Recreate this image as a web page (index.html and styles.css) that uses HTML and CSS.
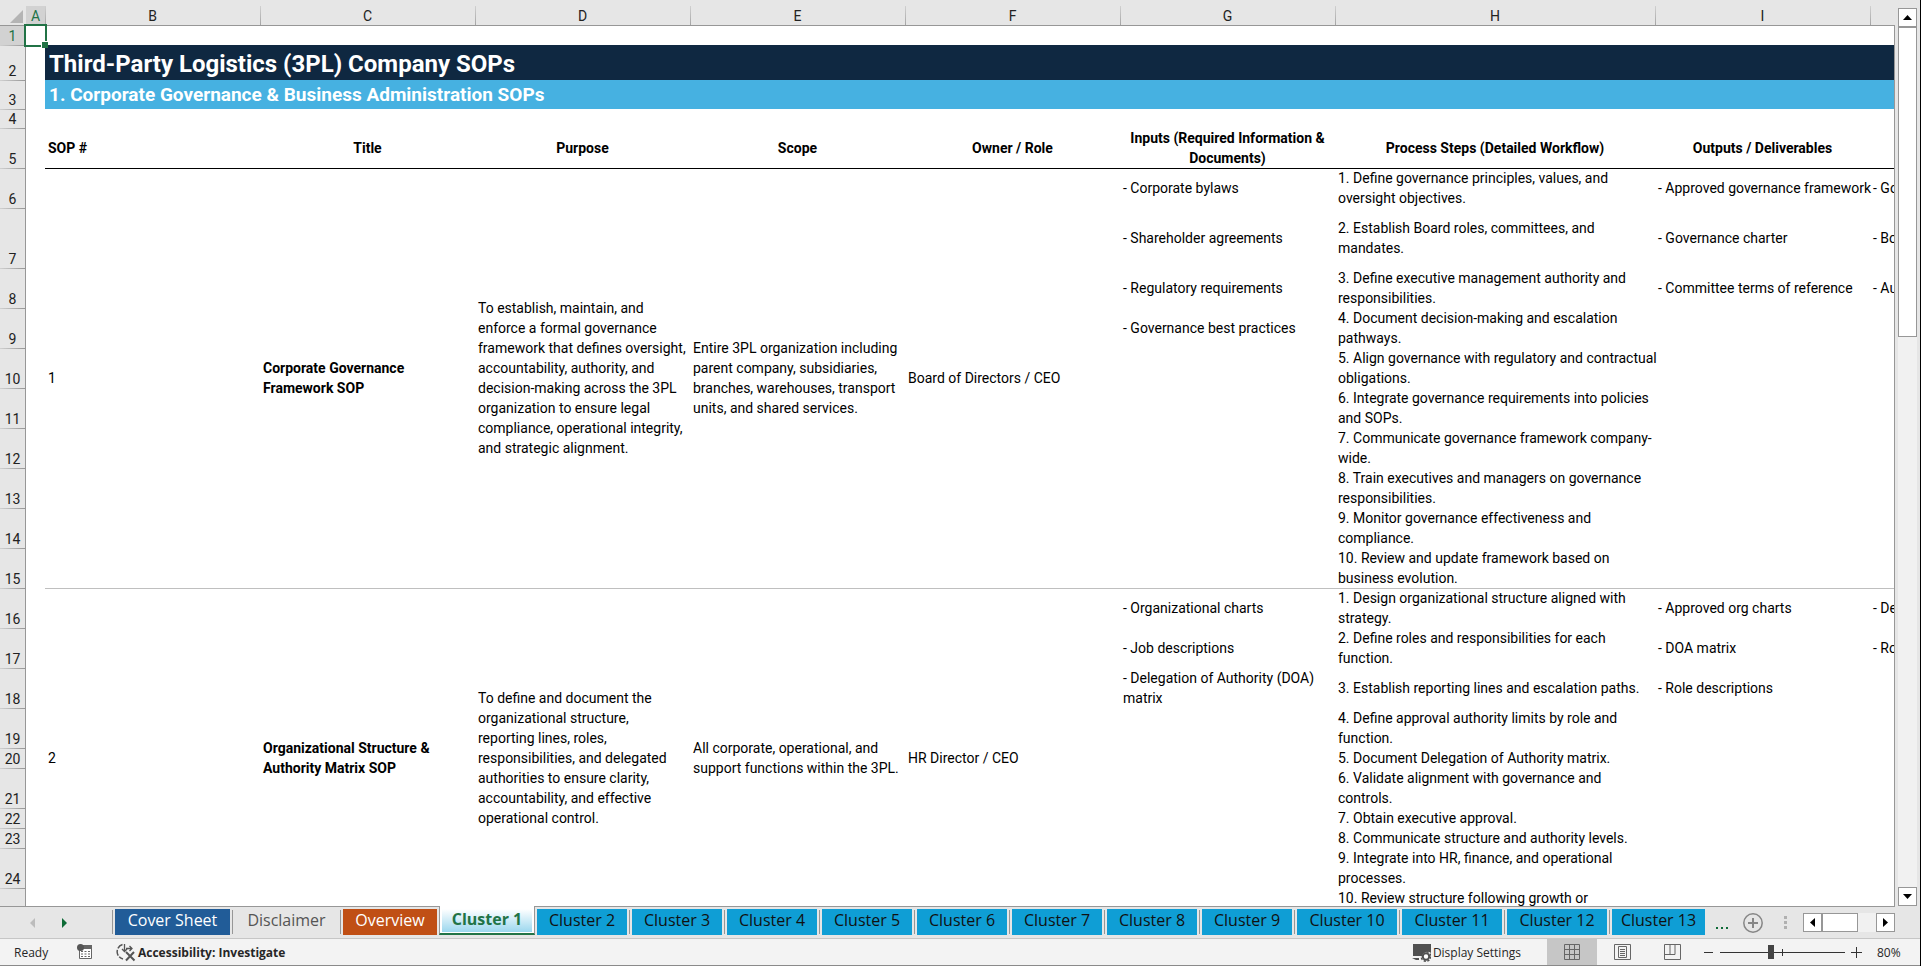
FILE: index.html
```
<!DOCTYPE html>
<html lang="en">
<head>
    <meta charset="utf-8">
    <title>Third-Party Logistics (3PL) Company SOPs</title>
    <link rel="stylesheet" href="styles.css">
</head>
<body>
    <main class="workspace">
        <div class="sheet">
            <table class="grid">
                <colgroup>
                    <col class="col-num">
                    <col class="col-a">
                    <col class="col-std"><col class="col-std"><col class="col-std"><col class="col-std"><col class="col-std"><col class="col-std">
                    <col class="col-steps">
                    <col class="col-std"><col class="col-std">
                </colgroup>
                <thead>
                    <tr>
                        <th class="corner"><svg width="13" height="13" viewBox="0 0 13 13"><path d="M13 0v13H0z" fill="#b4b4b4"/></svg></th>
                        <th class="selected">A</th>
                        <th>B</th><th>C</th><th>D</th><th>E</th><th>F</th><th>G</th><th>H</th><th>I</th><th></th>
                    </tr>
                </thead>
                <tbody>
                    <tr class="r-gap">
                        <th class="selected">1</th>
                        <td class="active-cell"></td>
                        <td colspan="9"></td>
                    </tr>
                    <tr class="r-title">
                        <th>2</th>
                        <td></td>
                        <td colspan="9" class="title">Third-Party Logistics (3PL) Company SOPs</td>
                    </tr>
                    <tr class="r-subtitle">
                        <th>3</th>
                        <td></td>
                        <td colspan="9" class="subtitle">1. Corporate Governance &amp; Business Administration SOPs</td>
                    </tr>
                    <tr class="r-gap">
                        <th>4</th>
                        <td></td>
                        <td colspan="9"></td>
                    </tr>
                    <tr class="r-double labels">
                        <th>5</th>
                        <td></td>
                        <td class="left">SOP #</td>
                        <td>Title</td>
                        <td>Purpose</td>
                        <td>Scope</td>
                        <td>Owner / Role</td>
                        <td>Inputs (Required Information &amp; Documents)</td>
                        <td>Process Steps (Detailed Workflow)</td>
                        <td>Outputs / Deliverables</td>
                        <td></td>
                    </tr>

                    <!-- SOP 1 -->
                    <tr class="r-double line-black">
                        <th>6</th>
                        <td class="plain"></td>
                        <td rowspan="10">1</td>
                        <td rowspan="10" class="name">Corporate Governance<br>Framework SOP</td>
                        <td rowspan="10">To establish, maintain, and<br>enforce a formal governance<br>framework that defines oversight,<br>accountability, authority, and<br>decision-making across the 3PL<br>organization to ensure legal<br>compliance, operational integrity,<br>and strategic alignment.</td>
                        <td rowspan="10">Entire 3PL organization including<br>parent company, subsidiaries,<br>branches, warehouses, transport<br>units, and shared services.</td>
                        <td rowspan="10">Board of Directors / CEO</td>
                        <td>- Corporate bylaws</td>
                        <td>1. Define governance principles, values, and<br>oversight objectives.</td>
                        <td>- Approved governance framework</td>
                        <td>- Go</td>
                    </tr>
                    <tr class="r-triple">
                        <th>7</th>
                        <td></td>
                        <td>- Shareholder agreements</td>
                        <td>2. Establish Board roles, committees, and<br>mandates.</td>
                        <td>- Governance charter</td>
                        <td>- Bo</td>
                    </tr>
                    <tr class="r-double">
                        <th>8</th>
                        <td></td>
                        <td>- Regulatory requirements</td>
                        <td>3. Define executive management authority and<br>responsibilities.</td>
                        <td>- Committee terms of reference</td>
                        <td>- Au</td>
                    </tr>
                    <tr class="r-double">
                        <th>9</th>
                        <td></td>
                        <td>- Governance best practices</td>
                        <td>4. Document decision-making and escalation<br>pathways.</td>
                        <td></td>
                        <td></td>
                    </tr>
                    <tr class="r-double">
                        <th>10</th>
                        <td></td>
                        <td></td>
                        <td>5. Align governance with regulatory and contractual<br>obligations.</td>
                        <td></td>
                        <td></td>
                    </tr>
                    <tr class="r-double">
                        <th>11</th>
                        <td></td>
                        <td></td>
                        <td>6. Integrate governance requirements into policies<br>and SOPs.</td>
                        <td></td>
                        <td></td>
                    </tr>
                    <tr class="r-double">
                        <th>12</th>
                        <td></td>
                        <td></td>
                        <td>7. Communicate governance framework company-<br>wide.</td>
                        <td></td>
                        <td></td>
                    </tr>
                    <tr class="r-double">
                        <th>13</th>
                        <td></td>
                        <td></td>
                        <td>8. Train executives and managers on governance<br>responsibilities.</td>
                        <td></td>
                        <td></td>
                    </tr>
                    <tr class="r-double">
                        <th>14</th>
                        <td></td>
                        <td></td>
                        <td>9. Monitor governance effectiveness and<br>compliance.</td>
                        <td></td>
                        <td></td>
                    </tr>
                    <tr class="r-double">
                        <th>15</th>
                        <td></td>
                        <td></td>
                        <td>10. Review and update framework based on<br>business evolution.</td>
                        <td></td>
                        <td></td>
                    </tr>

                    <!-- SOP 2 -->
                    <tr class="r-double line-grey">
                        <th>16</th>
                        <td class="plain"></td>
                        <td rowspan="10">2</td>
                        <td rowspan="10" class="name">Organizational Structure &amp;<br>Authority Matrix SOP</td>
                        <td rowspan="10">To define and document the<br>organizational structure,<br>reporting lines, roles,<br>responsibilities, and delegated<br>authorities to ensure clarity,<br>accountability, and effective<br>operational control.</td>
                        <td rowspan="10">All corporate, operational, and<br>support functions within the 3PL.</td>
                        <td rowspan="10">HR Director / CEO</td>
                        <td>- Organizational charts</td>
                        <td>1. Design organizational structure aligned with<br>strategy.</td>
                        <td>- Approved org charts</td>
                        <td>- De</td>
                    </tr>
                    <tr class="r-double">
                        <th>17</th>
                        <td></td>
                        <td>- Job descriptions</td>
                        <td>2. Define roles and responsibilities for each<br>function.</td>
                        <td>- DOA matrix</td>
                        <td>- Ro</td>
                    </tr>
                    <tr class="r-double">
                        <th>18</th>
                        <td></td>
                        <td>- Delegation of Authority (DOA)<br>matrix</td>
                        <td>3. Establish reporting lines and escalation paths.</td>
                        <td>- Role descriptions</td>
                        <td></td>
                    </tr>
                    <tr class="r-double">
                        <th>19</th>
                        <td></td>
                        <td></td>
                        <td>4. Define approval authority limits by role and<br>function.</td>
                        <td></td>
                        <td></td>
                    </tr>
                    <tr class="r-single">
                        <th>20</th>
                        <td></td>
                        <td></td>
                        <td>5. Document Delegation of Authority matrix.</td>
                        <td></td>
                        <td></td>
                    </tr>
                    <tr class="r-double">
                        <th>21</th>
                        <td></td>
                        <td></td>
                        <td>6. Validate alignment with governance and<br>controls.</td>
                        <td></td>
                        <td></td>
                    </tr>
                    <tr class="r-single">
                        <th>22</th>
                        <td></td>
                        <td></td>
                        <td>7. Obtain executive approval.</td>
                        <td></td>
                        <td></td>
                    </tr>
                    <tr class="r-single">
                        <th>23</th>
                        <td></td>
                        <td></td>
                        <td>8. Communicate structure and authority levels.</td>
                        <td></td>
                        <td></td>
                    </tr>
                    <tr class="r-double">
                        <th>24</th>
                        <td></td>
                        <td></td>
                        <td>9. Integrate into HR, finance, and operational<br>processes.</td>
                        <td></td>
                        <td></td>
                    </tr>
                    <tr class="r-double">
                        <th></th>
                        <td></td>
                        <td></td>
                        <td class="top">10. Review structure following growth or</td>
                        <td></td>
                        <td></td>
                    </tr>
                </tbody>
            </table>
        </div>
        <div class="gutter">
            <button class="scroll-btn" aria-label="Scroll up"><svg width="9" height="5" viewBox="0 0 9 5"><path d="M0 5L4.500 0 9 5z"/></svg></button>
            <div class="v-track"><div class="v-thumb"></div></div>
            <button class="scroll-btn" aria-label="Scroll down"><svg width="9" height="5" viewBox="0 0 9 5"><path d="M0 0L4.500 5 9 0z"/></svg></button>
        </div>
    </main>

    <nav class="tab-bar">
        <div class="tab-arrows">
            <button aria-label="Previous sheet"><svg width="5" height="10" viewBox="0 0 5 10"><path d="M5 0v10L0 5z" fill="#bcbcbc"/></svg></button>
            <button aria-label="Next sheet"><svg width="5" height="10" viewBox="0 0 5 10"><path d="M0 0v10l5-5z" fill="#0e6b37"/></svg></button>
        </div>
        <div class="tabs">
            <div class="slot"><button class="tab cover">Cover Sheet</button></div>
            <div class="slot"><button class="tab disclaimer">Disclaimer</button></div>
            <div class="slot"><button class="tab overview">Overview</button></div>
            <div class="slot current"><button class="tab">Cluster 1</button></div>
            <div class="slot first"><button class="tab cluster">Cluster 2</button></div>
            <div class="slot"><button class="tab cluster">Cluster 3</button></div>
            <div class="slot"><button class="tab cluster">Cluster 4</button></div>
            <div class="slot"><button class="tab cluster">Cluster 5</button></div>
            <div class="slot"><button class="tab cluster">Cluster 6</button></div>
            <div class="slot"><button class="tab cluster">Cluster 7</button></div>
            <div class="slot"><button class="tab cluster">Cluster 8</button></div>
            <div class="slot"><button class="tab cluster">Cluster 9</button></div>
            <div class="slot"><button class="tab cluster wide">Cluster 10</button></div>
            <div class="slot"><button class="tab cluster wide">Cluster 11</button></div>
            <div class="slot"><button class="tab cluster wide">Cluster 12</button></div>
            <div class="slot"><button class="tab cluster cut">Cluster 13</button></div>
        </div>
        <div class="tab-tools">
            <button aria-label="More sheets"><svg width="14" height="18" viewBox="0 0 14 18"><path d="M1 13h2v2H1zM6 13h2v2H6zM11 13h2v2h-2z" fill="#0e6b37"/></svg></button>
            <button aria-label="New sheet"><svg width="20" height="20" viewBox="0 0 20 20" fill="none" stroke="#868686"><circle cx="10" cy="10" r="9.200" stroke-width="1.500"/><path d="M10 5v10M5 10h10" stroke-width="2"/></svg></button>
            <svg class="handle" width="4" height="14" viewBox="0 0 4 14"><path d="M0 0h3v3H0zM0 5h3v3H0zM0 10h3v3H0z" fill="#b0b0b0"/></svg>
        </div>
        <div class="h-scroll">
            <button class="scroll-btn" aria-label="Scroll left"><svg width="5" height="9" viewBox="0 0 5 9"><path d="M5 0v9L0 4.500z"/></svg></button>
            <div class="h-track"><div class="h-thumb"></div></div>
            <button class="scroll-btn" aria-label="Scroll right"><svg width="5" height="9" viewBox="0 0 5 9"><path d="M0 0v9l5-4.500z"/></svg></button>
        </div>
    </nav>

    <footer class="status-bar">
        <span class="ready">Ready</span>
        <button class="macro" aria-label="Record macro">
            <svg width="16" height="16" viewBox="0 0 16 16"><path d="M2.500 2.500h12v12h-12z" fill="#fff" stroke="#666"/><path d="M6 1h9v4H6z" fill="#666"/><circle cx="3.500" cy="3.500" r="3.500" fill="#555"/><path d="M4 7.500h2M7.500 7.500h2M11 7.500h2M4 10h2M7.500 10h2M11 10h2M4 12.500h2M7.500 12.500h2M11 12.500h2" stroke="#666"/></svg>
        </button>
        <button class="access">
            <svg width="20" height="19" viewBox="0 0 20 19" fill="none" stroke="#555"><path d="M6.500 1.500A7.500 7.500 0 0 0 7 16" stroke-width="1.500" stroke-dasharray="6 1.500"/><path d="M8.500 1v7M6 6l2.500 2.500L11 6M10 5.500h6M13.500 3L16 5.500 13.500 8" stroke-width="1.300"/><path d="M10 9l8.500 8.500M18 9l-8 8.500" stroke-width="2"/></svg>
            Accessibility: Investigate
        </button>
        <button class="display">
            <svg width="19" height="19" viewBox="0 0 19 19"><path d="M1 1h18v9a5.500 5.500 0 0 0-9 3H1z" fill="#505050"/><path d="M0 15h7v2H4z" fill="#505050"/><circle cx="14" cy="13.500" r="3.200" fill="#fff" stroke="#505050" stroke-width="2"/><circle cx="14" cy="13.500" r="4.800" fill="none" stroke="#505050" stroke-width="1.500" stroke-dasharray="2.200 1.570"/></svg>
            Display Settings
        </button>
        <button class="view on" aria-label="Normal view"><svg width="17" height="17" viewBox="0 0 17 17" fill="none" stroke="#666"><path d="M.5.5h15v15H.5zM5.500.5v15M10.500.5v15M.5 5.500h15M.5 10.500h15"/></svg></button>
        <button class="view" aria-label="Page layout"><svg width="17" height="17" viewBox="0 0 17 17" fill="none" stroke="#666"><path d="M.5.5h16v15H.5zM4.500 2.500h8v11h-8zM6 5.500h5M6 7.500h5M6 9.500h5M6 11.500h5"/></svg></button>
        <button class="view" aria-label="Page break preview"><svg width="17" height="17" viewBox="0 0 17 17" fill="none" stroke="#666"><path d="M.5.5h16v15H.5zM.5 10.500h10.500V.5M6 .5v10"/></svg></button>
        <div class="zoom">
            <button aria-label="Zoom out"><svg width="11" height="11" viewBox="0 0 11 11"><path d="M1 5.500h9" stroke="#333"/></svg></button>
            <input type="range" min="0" max="100" value="40" aria-label="Zoom">
            <button aria-label="Zoom in"><svg width="11" height="11" viewBox="0 0 11 11"><path d="M0 5.500h11M5.500 0v11" stroke="#333"/></svg></button>
        </div>
        <span class="percent">80%</span>
    </footer>
</body>
</html>
```
FILE: styles.css
```
* {
    box-sizing: border-box;
}

body {
    margin: 0;
    height: 100vh;
    display: flex;
    flex-direction: column;
    overflow: hidden;
    background-color: #e6e6e6;
    border-right: 1px solid #000;
    font-family: Roboto, sans-serif;
    font-size: 14px;
    color: #000;
}

button {
    margin: 0;
    padding: 0;
    border: none;
    background: none;
    font-family: inherit;
    font-size: inherit;
    color: inherit;
}

svg {
    display: block;
    flex: none;
}

/* grid */
.workspace {
    flex: 1;
    min-height: 0;
    display: flex;
}

.sheet {
    flex: 1;
    min-width: 0;
    overflow: hidden;
}

.grid {
    table-layout: fixed;
    width: 2085px;
    border-collapse: separate;
    border-spacing: 0;
    background-color: #fff;
    line-height: 20px;
}

.col-num { width: 26px; }
.col-a { width: 19px; }
.col-std { width: 215px; }
.col-steps { width: 320px; }

.grid th,
.grid td {
    padding: 0 3px;
    vertical-align: middle;
    white-space: nowrap;
}

.grid th {
    padding: 0;
    font-weight: normal;
    color: #222;
    background: #e6e6e6;
}

.grid thead th {
    height: 26px;
    padding-top: 6px;
    line-height: 18px;
    border-bottom: 1px solid #979797;
    background: linear-gradient(#d0d0d0, #979797) no-repeat 0 6px / 1px 100% #e6e6e6;
}

.grid thead .corner {
    background: #e6e6e6;
    padding: 7px 0 0 10px;
}

.grid tbody th {
    vertical-align: bottom;
    line-height: 18px;
    border-right: 1px solid #979797;
    background: linear-gradient(90deg, #d0d0d0, #979797) no-repeat 0 0 / 100% 1px #e6e6e6;
}

.grid thead .selected,
.grid tbody .selected {
    background: #d2d2d2;
    color: #217346;
}

.grid thead .selected {
    background: linear-gradient(#d2d2d2, #d2d2d2) no-repeat 0 6px #e6e6e6;
}

.r-gap { height: 19px; }
.r-title { height: 35px; }
.r-subtitle { height: 29px; }
.r-single { height: 20px; }
.r-double { height: 40px; }
.r-triple { height: 60px; }

.active-cell {
    position: relative;
}

.active-cell::before {
    content: "";
    position: absolute;
    inset: -2px;
    border: 2px solid #217346;
}

.active-cell::after {
    content: "";
    position: absolute;
    right: -3px;
    bottom: -3px;
    width: 6px;
    height: 6px;
    border-top: 1px solid #fff;
    border-left: 1px solid #fff;
    background-color: #217346;
}

.grid .title {
    padding: 3px 0 0 4px;
    background-color: #0f2841;
    color: #fff;
    font-size: 24px;
    font-weight: bold;
}

.grid .subtitle {
    padding-left: 4px;
    background-color: #46b1e1;
    color: #fff;
    font-size: 19px;
    font-weight: bold;
}

.grid .labels td {
    text-align: center;
    font-weight: bold;
    white-space: normal;
}

.grid .labels .left {
    text-align: left;
}

.grid .name {
    font-weight: bold;
}

.grid .top {
    vertical-align: top;
}

.line-black td { box-shadow: inset 0 1px #000; }
.line-grey td { box-shadow: inset 0 1px #bfbfbf; }
.grid .plain { box-shadow: none; }

/* scrollbars */
.gutter {
    display: flex;
    flex-direction: column;
    width: 26px;
    padding: 8px 3px 0 4px;
    background: linear-gradient(#979797, #979797) no-repeat 0 25px / 1px 100%;
}

.scroll-btn {
    display: flex;
    align-items: center;
    justify-content: center;
    flex: none;
    width: 19px;
    height: 19px;
    border: 1px solid #979797;
    background-color: #fff;
}

.v-track {
    flex: 1;
    background-color: #f1f1f1;
}

.v-thumb {
    height: 36%;
    border: 1px solid #979797;
    background-color: #fff;
}

/* sheet tabs */
.tab-bar {
    display: flex;
    height: 33px;
    border-bottom: 1px solid #c6c6c6;
    font-family: "Open Sans", sans-serif;
    font-size: 16px;
}

.tab-arrows {
    display: flex;
    align-items: center;
    gap: 27px;
    width: 112px;
    padding-left: 30px;
    border-top: 1px solid #979797;
}

.tabs {
    display: flex;
}

.slot {
    padding: 2px 2px 0 2px;
    border-top: 1px solid #979797;
    background: linear-gradient(#979797, #979797) no-repeat 0 3px / 1px 24px;
}

.tab {
    display: block;
    height: 26px;
    margin-left: 1px;
    padding-bottom: 4px;
    line-height: 22px;
    text-align: center;
    color: #111;
}

.cover {
    width: 115px;
    background-color: #215c98;
    color: #fff;
}

.disclaimer {
    width: 103px;
    color: #555;
}

.overview {
    width: 94px;
    background-color: #c04f15;
    color: #fff;
}

.cluster {
    width: 90px;
    background-color: #0f9ed5;
}

.wide {
    width: 100px;
}

.cut {
    width: 93px;
    white-space: nowrap;
}

.current {
    height: 29px;
    padding-top: 3px;
    border: 1px solid #979797;
    border-top: none;
    border-bottom: 2px solid #217346;
    background: #fff;
}

.current .tab {
    width: 90px;
    height: 23px;
    margin: 0;
    padding: 0 0 3px;
    line-height: 20px;
    font-weight: bold;
    color: #217346;
    background: linear-gradient(#fff, #9bd7ee);
}

.first {
    padding-left: 1px;
    background: none;
}

.tab-tools {
    flex: 1;
    display: flex;
    align-items: center;
    gap: 14px;
    padding-left: 8px;
    border-top: 1px solid #979797;
}

.handle {
    margin-left: 7px;
}

.h-scroll {
    display: flex;
    align-items: center;
    width: 117px;
    padding-right: 25px;
    background: linear-gradient(#979797, #979797) no-repeat 0 0 / 92px 1px;
}

.h-track {
    flex: 1;
    height: 19px;
    background-color: #f1f1f1;
}

.h-thumb {
    width: 36px;
    height: 19px;
    border: 1px solid #979797;
    background-color: #fff;
}

/* status bar */
.status-bar {
    display: flex;
    align-items: center;
    height: 27px;
    background-color: #f3f3f3;
    border-bottom: 1px solid #8a8a8a;
    font-family: "Open Sans", sans-serif;
    font-size: 12px;
    color: #262626;
}

.ready {
    width: 77px;
    padding-left: 14px;
}

.access,
.display {
    display: flex;
    align-items: center;
    gap: 2px;
}

.access {
    margin-left: 23px;
    font-weight: bold;
}

.display {
    margin-left: auto;
    margin-right: 26px;
}

.view {
    display: flex;
    align-items: center;
    justify-content: center;
    width: 50px;
    height: 26px;
}

.on {
    background-color: #c6c6c6;
}

.zoom {
    display: flex;
    align-items: center;
    gap: 6px;
    margin-left: 6px;
}

.zoom input {
    -webkit-appearance: none;
    appearance: none;
    width: 125px;
    height: 14px;
    margin: 0;
    background:
        linear-gradient(#333, #333) no-repeat 50% 50% / 1px 7px,
        linear-gradient(#333, #333) no-repeat 0 50% / 100% 1px;
}

.zoom input::-webkit-slider-thumb {
    -webkit-appearance: none;
    width: 6px;
    height: 14px;
    background-color: #444;
}

.percent {
    width: 58px;
    padding-left: 15px;
}
```
